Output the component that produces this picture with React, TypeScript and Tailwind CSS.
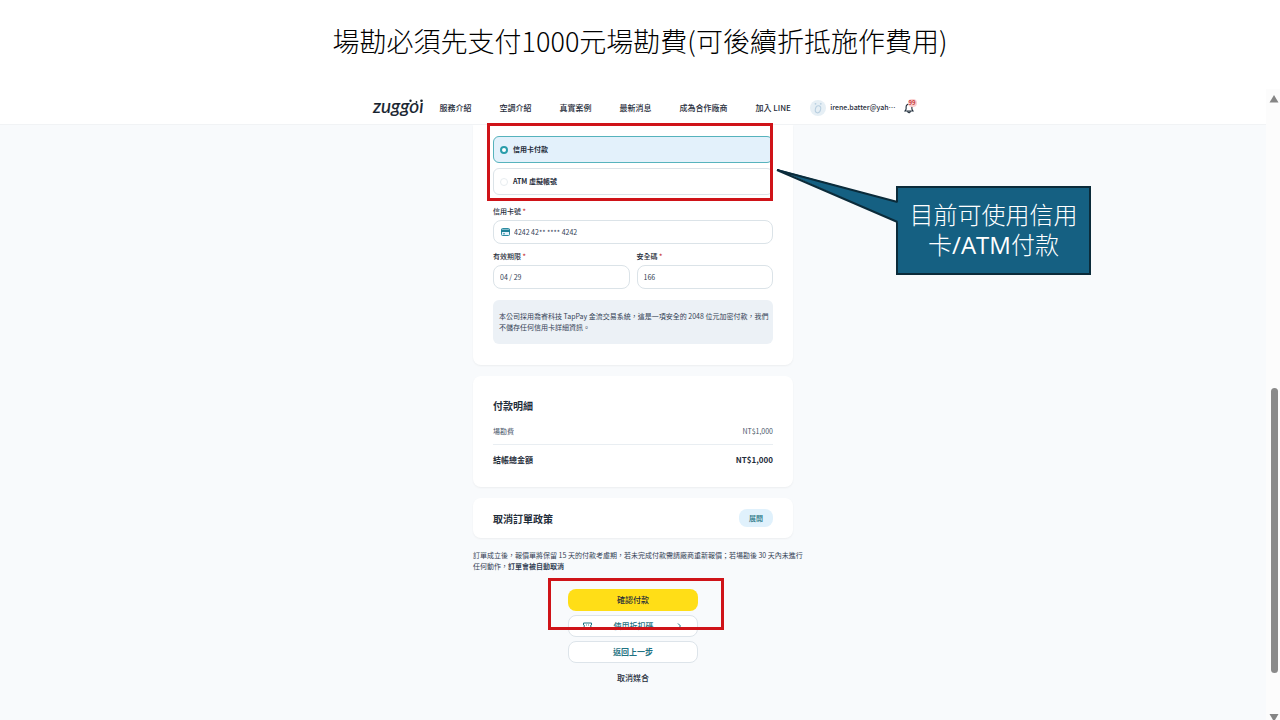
import type { ReactNode } from "react";

const navItems = ["服務介紹", "空調介紹", "真實案例", "最新消息", "成為合作廠商", "加入 LINE"];

function Logo() {
  return (
    <a href="#home" aria-label="zuggoi" className="mr-4 block w-[51px] text-[#16222e]">
      <svg viewBox="0 0 51 24" className="block h-6 w-full overflow-visible" fill="currentColor">
        <text x="0" y="17" fontFamily="Lato, sans-serif" fontStyle="italic" fontSize="19" stroke="currentColor" strokeWidth="0.2">zuggoı</text>
        <circle cx="37.500" cy="4.800" r="1.2" />
        <circle cx="43.500" cy="6" r="0.9" />
        <circle cx="48.500" cy="4.800" r="1.3" />
      </svg>
    </a>
  );
}

function Header() {
  return (
    <header className="flex h-9 justify-center border-b border-[#f1f3f5] bg-white pt-[2px] pl-[22px]">
      <div className="flex w-[543px] shrink-0 items-center">
        <Logo />
        <nav className="flex items-center gap-7 text-[8px] font-medium whitespace-nowrap">
          {navItems.map((item) => (
            <a key={item} href="#nav">{item}</a>
          ))}
        </nav>
        <div className="ml-auto flex items-center gap-1">
          <svg viewBox="0 0 16 16" className="size-4">
            <circle cx="8" cy="8" r="8" fill="#e6eff5" />
            <ellipse cx="8" cy="9.3" rx="2.600" ry="3.600" fill="none" stroke="#b9cfe0" strokeWidth="1.1" transform="rotate(15 8 9.3)" />
            <circle cx="5.500" cy="3.800" r="0.9" fill="#b9cfe0" />
            <circle cx="10.800" cy="3.800" r="0.9" fill="#b9cfe0" />
          </svg>
          <span className="text-[7px] font-medium">irene.batter@yah⋯</span>
          <button type="button" aria-label="99 則通知" className="relative ml-1 size-3">
            <svg viewBox="0 0 12 12" className="size-3" fill="none" stroke="#1f2d3a" strokeWidth="1.1">
              <path d="M1 9h8L7.900 7.200V5a2.900 2.900 0 0 0-5.800 0v2.200zM3.800 9.500a1.200 1.200 0 0 0 2.400 0" />
            </svg>
            <span className="absolute -top-[3px] left-1 rounded-full bg-[#fbd0d0] px-px text-[6px] leading-[8px] font-bold text-[#c53b3b]">99</span>
          </button>
        </div>
      </div>
    </header>
  );
}

function Label({ htmlFor, children }: { htmlFor: string; children: ReactNode }) {
  return (
    <label htmlFor={htmlFor} className="block text-[7px] leading-[10px] font-medium">
      {children} <span className="text-[#c53030]">*</span>
    </label>
  );
}

const inputClass = "block h-6 w-full rounded-lg border border-[#dbe3e8] bg-white text-[7px] text-[#334155]";

function PaymentCard() {
  return (
    <section className="rounded-b-lg bg-white px-5 pt-[11px] pb-[21px] shadow-xs">
      <div className="flex flex-col gap-[5px]">
        <label className="flex h-[27px] items-center gap-[5px] rounded-md border border-[#56b3bd] bg-[#e3f1fb] px-[6px] text-[7px] font-bold">
          <input type="radio" name="method" defaultChecked className="size-2 appearance-none rounded-full border-2 border-[#2a9dab] bg-white" />
          信用卡付款
        </label>
        <label className="flex h-[27px] items-center gap-[5px] rounded-md border border-[#dbe3e8] px-[6px] text-[7px] font-bold">
          <input type="radio" name="method" className="size-2 appearance-none rounded-full border border-[#e8edf0] bg-white" />
          ATM 虛擬帳號
        </label>
      </div>
      <div className="mt-[11px] flex flex-col gap-1">
        <Label htmlFor="card">信用卡號</Label>
        <div className="relative">
          <input id="card" defaultValue="4242 42** **** 4242" className={inputClass + " pl-5"} />
          <svg viewBox="0 0 9 8" className="absolute top-2 left-2 h-2 w-[9px]">
            <rect x="0.5" y="0.5" width="8" height="7" rx="1" fill="#e3f1fb" stroke="#2b8ba0" />
            <path d="M0 1.500h9V4H0z" fill="#1f8298" />
            <path d="M2 5.800h2" stroke="#2b8ba0" />
          </svg>
        </div>
      </div>
      <div className="mt-[7px] grid grid-cols-2 gap-[7px]">
        <div className="flex flex-col gap-1">
          <Label htmlFor="expiry">有效期限</Label>
          <input id="expiry" defaultValue="04 / 29" className={inputClass + " px-[6px]"} />
        </div>
        <div className="flex flex-col gap-1">
          <Label htmlFor="cvc">安全碼</Label>
          <input id="cvc" defaultValue="166" className={inputClass + " px-[6px]"} />
        </div>
      </div>
      <p className="mt-[11px] rounded-md bg-[#ecf1f6] px-[6px] py-[11px] text-[7px] leading-[11px] whitespace-nowrap text-[#334155]">
        本公司採用喬睿科技 TapPay 金流交易系統，這是一項安全的 2048 位元加密付款，我們
        <br />
        不儲存任何信用卡詳細資訊。
      </p>
    </section>
  );
}

function DetailCard() {
  return (
    <section className="mt-[11px] rounded-lg bg-white px-5 pt-[22px] pb-5 shadow-xs">
      <h2 className="text-[10px] leading-4 font-bold">付款明細</h2>
      <div className="mt-3 flex justify-between pb-[7px] text-[7px] leading-[11px] text-[#475569]">
        <span>場勘費</span>
        <span>NT$1,000</span>
      </div>
      <div className="flex justify-between border-t border-[#e9eef2] pt-2 text-[8px] leading-[14px] font-bold">
        <span>結帳總金額</span>
        <span>NT$1,000</span>
      </div>
    </section>
  );
}

function Actions() {
  return (
    <div className="mx-auto mt-[17px] flex w-[130px] flex-col gap-1 text-[8px] font-medium">
      <button type="button" className="h-[22px] rounded-lg bg-[#ffde17]">確認付款</button>
      <button type="button" className="flex h-[22px] items-center justify-between rounded-lg border border-[#dde4ea] bg-white px-[14px] text-[#1f7383]">
        <svg viewBox="0 0 9 8" className="h-2 w-[9px]" fill="none" stroke="currentColor">
          <path d="M0.5 1h8v2a1 1 0 0 0 0 2v2h-8V5a1 1 0 0 0 0-2zM3 3h.8M5.200 3H6" />
        </svg>
        使用折扣碼
        <svg viewBox="0 0 8 8" className="size-2" fill="none" stroke="currentColor">
          <path d="M3 1.500 5.500 4 3 6.500" />
        </svg>
      </button>
      <button type="button" className="h-[22px] rounded-lg border border-[#dde4ea] bg-white font-bold text-[#1f7383]">返回上一步</button>
      <button type="button" className="h-[22px]">取消媒合</button>
    </div>
  );
}

function Callout() {
  return (
    <div className="absolute top-[61px] left-[423px] w-[195px] border-2 border-[#0b2b3a] bg-[#156082] pt-[11px] pb-[14px] text-center text-[24px] leading-[30px] font-light whitespace-nowrap text-white">
      目前可使用信用
      <br />
      卡<span className="font-['Open_Sans','Noto_Sans',sans-serif] leading-5 font-medium">/ATM</span>付款
      <svg viewBox="0 0 126 60" className="absolute -top-5 -left-[123px] h-[60px] w-[126px]">
        <path d="M126 35 122 34 2 1l120 53 4 2z" fill="#156082" />
        <path d="M122.500 34 2 2l120.500 52" fill="none" stroke="#0b2b3a" strokeWidth="2" />
      </svg>
    </div>
  );
}

function Scrollbar() {
  return (
    <div aria-hidden="true" className="flex w-[14px] flex-col items-end justify-between bg-[#fcfcfc] pt-[6px] pr-px">
      <svg viewBox="0 0 10 8" className="h-2 w-[10px]" fill="#858585">
        <path d="M5 0 9.500 7.500H.5z" />
      </svg>
      <div className="flex flex-1 flex-col items-center pr-px">
        <div className="grow-[284]" />
        <div className="w-[7px] grow-[284] rounded-full bg-[#8a8a8a]" />
        <div className="grow-[41]" />
      </div>
      <svg viewBox="0 0 10 6" className="h-[6px] w-[10px]" fill="#858585">
        <path d="M.5 0h9L6 6H4z" />
      </svg>
    </div>
  );
}

export default function App() {
  return (
    <div lang="zh-Hant" className="flex min-h-screen flex-col bg-white font-['Noto_Sans_CJK_TC',sans-serif] text-[#1f2d3a]">
      <h1 className="px-4 pt-[21px] pb-7 text-center text-[27px] leading-10 font-light text-black">
        場勘必須先支付1000元場勘費(可後續折抵施作費用)
      </h1>
      <div className="flex flex-1">
        <div className="min-w-0 flex-1 bg-[#f8fafc]">
          <Header />
          <main className="relative mx-auto w-80">
            <PaymentCard />
            <DetailCard />
            <section className="mt-[11px] flex h-10 items-center justify-between rounded-lg bg-white px-5 shadow-xs">
              <h2 className="text-[10px] font-bold">取消訂單政策</h2>
              <button type="button" className="h-[18px] rounded-lg bg-[#e0f1fc] px-[10px] text-[7px] font-medium text-[#1f7383]">展開</button>
            </section>
            <p className="mt-3 text-[7px] leading-[11px] whitespace-nowrap text-[#334155]">
              訂單成立後，報價單將保留 15 天的付款考慮期，若未完成付款需請廠商重新報價；若場勘後 30 天內未進行
              <br />
              任何動作，<strong>訂單會被自動取消</strong>
            </p>
            <Actions />
            <div className="pointer-events-none absolute -top-[2px] left-[14px] h-[78px] w-[286px] border-3 border-[#cf1318]" />
            <div className="pointer-events-none absolute top-[453px] left-[75px] h-[52px] w-[176px] border-3 border-[#cf1318]" />
            <Callout />
          </main>
        </div>
        <Scrollbar />
      </div>
    </div>
  );
}
